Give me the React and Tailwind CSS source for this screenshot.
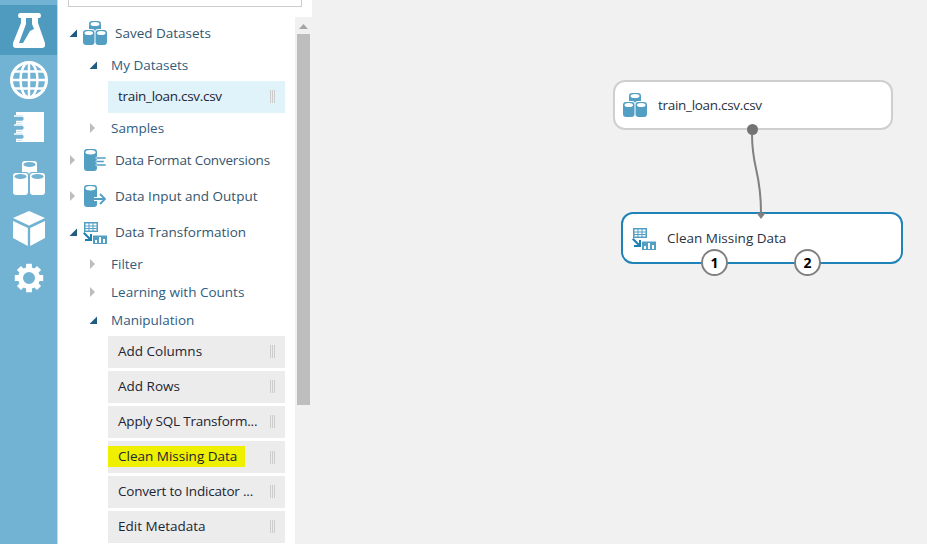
import React from 'react';

const Caret = ({ open }) => (
    <svg width="8" height="10" viewBox="0 0 8 10" className="shrink-0">
        {open ? <path d="M8 1.5V9H0.5Z" fill="#1f5c80" /> : <path d="M1 0L6 5L1 10Z" fill="#bdbdbd" />}
    </svg>
);

const Grip = () => (
    <span className="ml-auto flex h-[13px] gap-px">
        <i className="w-px bg-[#cccccc]" />
        <i className="w-px bg-[#cccccc]" />
        <i className="w-px bg-[#cccccc]" />
    </span>
);

const Can = ({ x, y, fill = '#539fc4', top = '#ffffff', w = 12, h = 16, ry = 2 }) => (
    <g>
        <rect x={x} y={y} width={w} height={h} rx="3" fill={fill} />
        <ellipse cx={x + w / 2} cy={y + ry + 1} rx={w / 2 - 1.5} ry={ry} fill={top} />
    </g>
);

const DatasetIcon = () => (
    <svg width="24" height="24" viewBox="0 0 24 24" className="shrink-0">
        <Can x={6} y={0} w={12} h={12} />
        <rect x={-1} y={8} width={13} height={16} rx="3" fill="#fff" />
        <rect x={12} y={8} width={13} height={16} rx="3" fill="#fff" />
        <Can x={0} y={9} w={11.5} h={15} />
        <Can x={12.5} y={9} w={11.5} h={15} />
    </svg>
);

const ConvertIcon = () => (
    <svg width="24" height="24" viewBox="0 0 24 24" className="shrink-0">
        <Can x={1} y={1} w={13} h={22} ry={2.2} />
        <path d="M13 9H23V11H13ZM13 12.5H21V14.5H13ZM13 16H23V18H13Z" fill="#539fc4" stroke="#fff" strokeWidth="0.5" />
    </svg>
);

const InputIcon = () => (
    <svg width="24" height="24" viewBox="0 0 24 24" className="shrink-0">
        <Can x={1} y={1} w={13} h={22} ry={2.2} />
        <path d="M11 15H22M17 10L22 15L17 20" fill="none" stroke="#fff" strokeWidth="4" />
        <path d="M11 15H22M17 10L22 15L17 20" fill="none" stroke="#539fc4" strokeWidth="1.8" />
    </svg>
);

const TransformIcon = () => (
    <svg width="24" height="24" viewBox="0 0 24 24" className="shrink-0">
        <path d="M1 2H15V12H1Z" fill="#539fc4" />
        <path d="M2.5 3.5H5.5V5.5H2.5ZM6.5 3.5H9.5V5.5H6.5ZM10.5 3.5H13.5V5.5H10.5ZM2.5 6.5H5.5V8H2.5ZM6.5 6.5H9.5V8H6.5ZM10.5 6.5H13.5V8H10.5ZM2.5 9H5.5V10.5H2.5ZM6.5 9H9.5V10.5H6.5ZM10.5 9H13.5V10.5H10.5Z" fill="#fff" />
        <path d="M0 13.5L1.5 12L7 17.5V14H9V21H2V19H5.5Z" fill="#1f7fb0" />
        <path d="M10 15.5H24V24H10Z" fill="#539fc4" />
        <path d="M12 20H14V23H12ZM16 17H18V23H16ZM20 19H22V23H20Z" fill="#fff" />
    </svg>
);

const Flask = () => (
    <svg width="32" height="36" viewBox="0 0 32 36">
        <path fillRule="evenodd" d="M7 0H26Q28 0 28 2.5T26 5H25V10L32 30Q33 35 29 35H3Q-1 35 0 30L8 10V5H7Q5 5 5 2.5T7 0ZM13 5V11L6 30H10L17 18L21 16L19 11V5Z" fill="#fff" />
    </svg>
);

const Globe = () => (
    <svg width="38" height="38" viewBox="0 0 38 38" fill="none" stroke="#fff">
        <circle cx="19" cy="19" r="17.5" strokeWidth="3" />
        <ellipse cx="19" cy="19" rx="8.5" ry="17.5" strokeWidth="2.5" />
        <path d="M19 2V36M2 19H36M4.5 10.5H33.5M4.5 27.5H33.5" strokeWidth="2.5" />
    </svg>
);

const Notebook = () => (
    <svg width="30" height="30" viewBox="0 0 30 30">
        <path d="M2 0H30V30H2Z" fill="#fff" />
        {[4, 13, 22].map(y => (
            <g key={y}>
                <rect x="0" y={y - 1} width="10" height="7.5" rx="3" fill="#72b2d3" />
                <path d={`M0 ${y}H8Q10.5 ${y} 10.5 ${y + 2.75}T8 ${y + 5.5}H2`} fill="none" stroke="#fff" strokeWidth="1.7" />
            </g>
        ))}
    </svg>
);

const NavCans = () => (
    <svg width="32" height="34" viewBox="0 0 32 34">
        <Can x={9} y={0} w={15} h={14} fill="#fff" top="#72b2d3" ry={2.5} />
        <rect x={-1} y={11} width={17} height={23} rx="3" fill="#72b2d3" />
        <rect x={16} y={11} width={17} height={23} rx="3" fill="#72b2d3" />
        <Can x={0} y={12} w={15} h={22} fill="#fff" top="#72b2d3" ry={2.5} />
        <Can x={17} y={12} w={15} h={22} fill="#fff" top="#72b2d3" ry={2.5} />
    </svg>
);

const Cube = () => (
    <svg width="32" height="35" viewBox="0 0 32 35" fill="#fff">
        <path d="M16 0L32 7L16 14.5L0 7Z" />
        <path d="M0 10L14.8 17V35L0 27Z" />
        <path d="M32 10L17.2 17V35L32 27Z" />
    </svg>
);

// eight rounded teeth round a round hole
const gearPath = () => {
    const pts = [];
    for (let i = 0; i < 8; i++) {
        const a = (i * Math.PI) / 4;
        [[-0.27, 11], [-0.2, 14.5], [0.2, 14.5], [0.27, 11]].forEach(([d, r]) => {
            pts.push(`${(15 + r * Math.sin(a + d)).toFixed(2)} ${(15 - r * Math.cos(a + d)).toFixed(2)}`);
        });
    }
    return `M${pts.join('L')}ZM15 9A6 6 0 1 0 15 21A6 6 0 1 0 15 9Z`;
};

const Gear = () => (
    <svg width="30" height="30" viewBox="0 0 30 30">
        <path fillRule="evenodd" fill="#fff" d={gearPath()} />
    </svg>
);

const Heading = ({ open, icon, children, className }) => (
    <div className="flex h-9 items-center pl-[11px]">
        <Caret open={open} />
        <span className="ml-[6px] flex w-[32px] shrink-0 justify-start">{icon}</span>
        <span className={`text-[13.5px] font-medium text-[#34556e] ${className || ''}`}>{children}</span>
    </div>
);

const SubHeading = ({ open, children }) => (
    <div className="flex h-7 items-center pl-[31px]">
        <Caret open={open} />
        <span className="ml-[14px] text-[13.5px] font-medium text-[#2f5d80]">{children}</span>
    </div>
);

const Module = ({ children, highlight, selected, className }) => (
    <div className={`ml-[50px] flex h-8 w-[177px] items-center pr-[10px] text-[13.5px] text-[#1d2433] ${selected ? 'bg-[#e0f2fa]' : 'bg-[#ececec]'} ${highlight ? '' : 'pb-[2px] pl-[10px]'}`}>
        {highlight ? <span className="mb-px bg-[#eef000] py-px pl-[10px] pr-2 leading-[19px]">{children}</span> : <span className={`whitespace-nowrap ${className || ''}`}>{children}</span>}
        <Grip />
    </div>
);

const App = () => {
    return (
        <div className="flex h-[544px] w-[927px] overflow-hidden bg-[#f1f1f1] font-['Open_Sans','Noto_Sans',sans-serif]">
            <nav className="flex w-[58px] shrink-0 flex-col items-center border-r border-[#c5d8e3] bg-[#72b2d3]">
                <div className="mt-[5px] flex h-[50px] w-full items-center justify-center bg-[#4f9bbf] pt-px"><Flask /></div>
                <div className="mt-[6px]"><Globe /></div>
                <div className="mt-[13px]"><Notebook /></div>
                <div className="mt-[19px]"><NavCans /></div>
                <div className="mt-[16px]"><Cube /></div>
                <div className="mt-[17px]"><Gear /></div>
            </nav>

            <aside className="flex w-[254px] shrink-0 bg-white">
                <div className="w-[237px] shrink-0">
                    <div className="ml-[10px] h-[7px] w-[234px] border-x border-b border-[#cccccc]" />
                    <div className="mt-2">
                        <Heading open icon={<DatasetIcon />}>Saved Datasets</Heading>
                    </div>
                    <SubHeading open>My Datasets</SubHeading>
                    <div className="mt-[2px]"><Module selected className="tracking-[-0.3px]">train_loan.csv.csv</Module></div>
                    <div className="mt-[1px]"><SubHeading>Samples</SubHeading></div>
                    <Heading icon={<ConvertIcon />} className="tracking-[-0.2px]">Data Format Conversions</Heading>
                    <Heading icon={<InputIcon />}>Data Input and Output</Heading>
                    <Heading open icon={<TransformIcon />}>Data Transformation</Heading>
                    <SubHeading>Filter</SubHeading>
                    <SubHeading>Learning with Counts</SubHeading>
                    <SubHeading open>Manipulation</SubHeading>
                    <div className="mt-[2px] flex flex-col gap-[3px]">
                        <Module>Add Columns</Module>
                        <Module>Add Rows</Module>
                        <Module className="tracking-[-0.2px]">Apply SQL Transform...</Module>
                        <Module highlight>Clean Missing Data</Module>
                        <Module className="tracking-[-0.2px]">Convert to Indicator ...</Module>
                        <Module>Edit Metadata</Module>
                    </div>
                </div>
                <div className="mt-[17px] flex w-[17px] flex-col items-center bg-[#f1f1f1]">
                    <svg width="9" height="5" viewBox="0 0 9 5" className="mt-[7px]"><path d="M4.5 0L9 5H0Z" fill="#a6a6a6" /></svg>
                    <div className="mt-[5px] h-[371px] w-[13px] bg-[#bebebe]" />
                </div>
            </aside>

            <main className="relative flex-1">
                <div className="absolute left-[301px] top-[80px] flex h-[50px] w-[280px] items-center rounded-[12px] border-2 border-[#cfcfcf] bg-white pl-[8px] text-[13.5px] text-[#2a3240]">
                    <DatasetIcon />
                    <span className="ml-[11px] tracking-[-0.3px]">train_loan.csv.csv</span>
                    <span className="absolute bottom-[-7px] left-[132px] h-[11px] w-[11px] rounded-full bg-[#737373]" />
                </div>
                <div className="absolute left-[309px] top-[212px] flex h-[52px] w-[282px] items-center rounded-[12px] border-2 border-[#1f83b8] bg-white pl-[9px] text-[13.5px] text-[#2a3240]">
                    <TransformIcon />
                    <span className="ml-[11px]">Clean Missing Data</span>
                    <span className="absolute bottom-[-14px] left-[78px] flex h-[27px] w-[27px] items-center justify-center rounded-full border-2 border-[#808080] bg-white text-[14px] font-bold text-black">1</span>
                    <span className="absolute bottom-[-14px] left-[171px] flex h-[27px] w-[27px] items-center justify-center rounded-full border-2 border-[#808080] bg-white text-[14px] font-bold text-black">2</span>
                </div>
                <svg className="absolute left-[420px] top-[120px]" width="40" height="100" viewBox="0 0 40 100" fill="none">
                    <path d="M20 14C20 50 29 50 29 93" stroke="#808080" strokeWidth="2" />
                    <path d="M24.5 93H33.5L29 99Z" fill="#808080" />
                </svg>
            </main>
        </div>
    );
};

export default App;
